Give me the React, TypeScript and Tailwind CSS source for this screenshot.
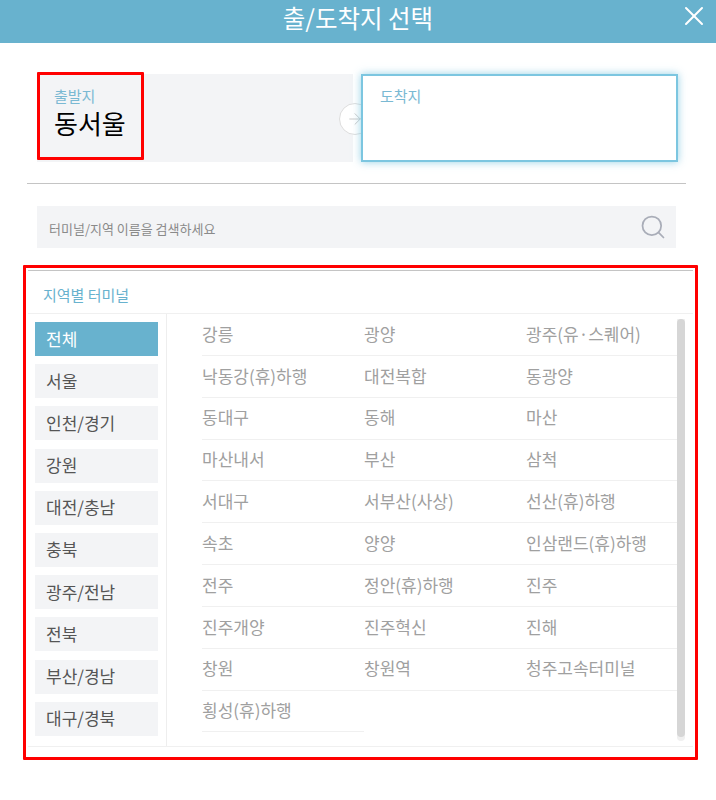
import React from "react";
import { X, Search, ArrowRight } from "lucide-react";

const regions = ["전체", "서울", "인천/경기", "강원", "대전/충남", "충북", "광주/전남", "전북", "부산/경남", "대구/경북"];

const terminals = [
    "강릉", "광양", "광주(유·스퀘어)",
    "낙동강(휴)하행", "대전복합", "동광양",
    "동대구", "동해", "마산",
    "마산내서", "부산", "삼척",
    "서대구", "서부산(사상)", "선산(휴)하행",
    "속초", "양양", "인삼랜드(휴)하행",
    "전주", "정안(휴)하행", "진주",
    "진주개양", "진주혁신", "진해",
    "창원", "창원역", "청주고속터미널",
    "횡성(휴)하행",
];

export default function App() {
    return (
        <div className="relative w-[716px] h-[800px] bg-white overflow-hidden font-['Noto_Sans_CJK_KR','Noto_Sans',sans-serif]">
            {/* Header */}
            <div className="relative h-[43px] bg-[#68b2ce] flex items-center justify-center text-white text-[24.5px] leading-none">
                <span className="-mt-[7px]">출/도착지 선택</span>
                <X size={32} strokeWidth={1.5} className="absolute right-[6px] top-0" />
            </div>

            {/* Departure / Arrival */}
            <div className="relative flex mt-[31px] ml-[37px] w-[641px] h-[88px] gap-[8px]">
                <div className="w-[316px] bg-[#f3f4f6] pl-[17px] pt-[12px]">
                    <div className="text-[15px] leading-[20px] text-[#7ab9d3]">출발지</div>
                    <div className="text-[26px] leading-[34px] text-black">동서울</div>
                </div>
                <div className="absolute left-[302px] top-[29px] w-[32px] h-[32px] rounded-full bg-white border border-[#dddddd] flex items-center justify-start pl-[6px] text-[#c4c4c4]">
                    <ArrowRight size={18} strokeWidth={1.25} />
                </div>
                <div className="relative flex-1 bg-white border-2 border-[#7cc6e0] shadow-[0_0_8px_rgba(124,198,224,0.8)] pl-[17px] pt-[10px]">
                    <div className="text-[15px] leading-[20px] text-[#7ab9d3]">도착지</div>
                </div>
                {/* Red highlight */}
                <div className="absolute -top-[2px] left-0 w-[107px] h-[88px] border-[3px] border-[#ff0000] rounded-[1px]" />
            </div>

            <div className="mt-[21px] ml-[27px] w-[659px] h-px bg-[#c4c4c4]" />

            {/* Search */}
            <div className="mt-[22px] ml-[37px] w-[639px] h-[42px] bg-[#f3f4f6] flex items-center justify-between pl-[12px] pr-[9px]">
                <span className="text-[13px] text-[#8a8a8a] mt-[4px]">터미널/지역 이름을 검색하세요</span>
                <Search size={28} strokeWidth={1.5} className="text-[#a9adb8]" />
            </div>

            {/* Terminals panel */}
            <div className="relative mt-[17px] ml-[23px] w-[675px] h-[495px] border-[3px] border-[#ff0000] rounded-[1px] pt-[2px] px-[2px]">
                <div className="h-[43px] border-t border-[#c4c4c4] pl-[15px] pt-[14px] text-[15px] leading-[20px] text-[#68b2ce]">
                    지역별 터미널
                </div>
                <div className="flex h-[434px] border-t border-b border-[#f0f0f0]">
                    <div className="w-[139px] shrink-0 border-r border-[#eeeeee] pl-[7px] pt-[8px] flex flex-col gap-[8.2px]">
                        {regions.map((r, i) => (
                            <div
                                key={r}
                                className={`w-[123px] h-[34px] flex items-center pl-[11px] text-[17px] leading-none pb-[2px] ${i === 0 ? "bg-[#68b2ce] text-white" : "bg-[#f3f4f6] text-[#555555]"}`}
                            >
                                {r}
                            </div>
                        ))}
                    </div>
                    <div className="grid grid-cols-[162px_162px_159px] auto-rows-[41.85px] pl-[35px] content-start">
                        {terminals.map((t) => (
                            <div key={t} className="border-b border-[#f0f0f0] flex items-center pb-[2px] text-[17px] text-[#a0a0a0] whitespace-nowrap">
                                {t}
                            </div>
                        ))}
                    </div>
                </div>
                {/* Scrollbar */}
                <div className="absolute right-[10px] top-[51px] w-[8px] h-[422px] rounded-b-full bg-[#f0f0f0]" />
                <div className="absolute right-[10px] top-[51px] w-[8px] h-[418px] rounded-full bg-[#d6d6d6]" />
            </div>
        </div>
    );
}
